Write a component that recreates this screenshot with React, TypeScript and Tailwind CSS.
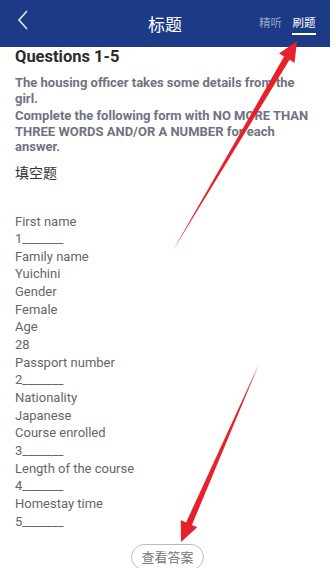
import React from "react";

const fields: string[] = [
  "First name",
  "1_______",
  "Family name",
  "Yuichini",
  "Gender",
  "Female",
  "Age",
  "28",
  "Passport number",
  "2_______",
  "Nationality",
  "Japanese",
  "Course enrolled",
  "3_______",
  "Length of the course",
  "4_______",
  "Homestay time",
  "5_______",
];

function Arrow({ x1, y1, x2, y2 }: { x1: number; y1: number; x2: number; y2: number }) {
  const dx = x2 - x1;
  const dy = y2 - y1;
  const len = Math.hypot(dx, dy);
  const ux = dx / len;
  const uy = dy / len;
  const px = -uy;
  const py = ux;
  const headLen = 20;
  const headW = 9;
  const shaftW = 3.2;
  const bx = x2 - ux * headLen;
  const by = y2 - uy * headLen;
  const pts = [
    [x1, y1],
    [bx + px * shaftW, by + py * shaftW],
    [bx + px * headW, by + py * headW],
    [x2, y2],
    [bx - px * headW, by - py * headW],
    [bx - px * shaftW, by - py * shaftW],
  ]
    .map((p) => p.join(","))
    .join(" ");
  return <polygon points={pts} fill="#e8202a" />;
}

export default function App() {
  return (
    <div
      className="relative w-[330px] h-[568px] overflow-hidden bg-white"
      style={{ fontFamily: "Roboto, 'Noto Sans CJK SC', sans-serif" }}
    >
      <header className="h-[47px] bg-[#1d3a87] grid grid-cols-[1fr_auto_1fr] items-center">
        <div className="pl-[17px] flex items-center">
          <svg width="12" height="20" viewBox="0 0 12 20" className="mt-[-8px]">
            <path d="M10 1 L2 10 L10 19" fill="none" stroke="#e6e9f5" strokeWidth="1.6" />
          </svg>
        </div>
        <div className="text-white text-[17px] leading-none pt-[4px]">标题</div>
        <div className="flex justify-end items-start gap-[10px] pr-[14px] pt-[6px]">
          <span className="text-[11.5px] text-[#9aa3c6] leading-none">精听</span>
          <span className="flex flex-col items-center">
            <span className="text-[11.5px] text-white leading-none">刷题</span>
            <span className="mt-[4px] h-[2px] w-[24px] bg-white" />
          </span>
        </div>
      </header>

      <main className="px-[15px]">
        <h1 className="text-[16.5px] font-bold text-[#2b2b2b] leading-[20px]">Questions 1-5</h1>
        <div className="mt-[8px] text-[13px] font-bold text-[#70737f] leading-[15.5px]">
          <p>The housing officer takes some details from the girl.</p>
          <p className="mt-[2px]">
            Complete the following form with NO MORE THAN THREE WORDS AND/OR A NUMBER for each answer.
          </p>
        </div>
        <p className="mt-[9px] text-[14px] text-[#333] leading-[18px]">填空题</p>

        <ul className="mt-[31px] text-[13px] text-[#666] leading-[17.65px]">
          {fields.map((f, i) => (
            <li key={i}>{f}</li>
          ))}
        </ul>

        <div className="flex justify-center mt-[14px] pl-[5px]">
          <button className="h-[26px] px-[9px] rounded-full border border-[#bdbdbd] text-[13px] text-[#777] leading-none">
            查看答案
          </button>
        </div>
      </main>

      <svg className="absolute inset-0 pointer-events-none" width="330" height="568">
        <Arrow x1={172} y1={252} x2={297} y2={41} />
        <Arrow x1={259} y1={364} x2={181} y2={542} />
      </svg>
    </div>
  );
}
